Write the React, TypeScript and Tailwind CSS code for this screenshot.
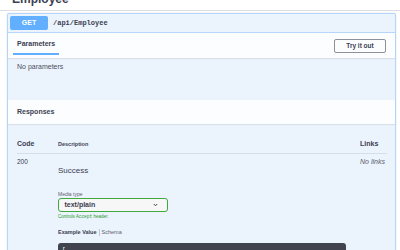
function Chevron() {
  return (
    <svg width="5" height="4" viewBox="0 0 10 8" fill="none" stroke="#3b4151" strokeWidth="2">
      <path d="M1.5 2l3.5 3.5L8.5 2" />
    </svg>
  );
}

export default function App() {
  return (
    <div className="h-[250px] w-[400px] overflow-hidden bg-white font-['Liberation_Sans',Arial,sans-serif] text-[#3b4151]">
      {/* tag title */}
      <div className="h-[11px] overflow-hidden border-b border-[#dcdee3] pl-[12px]">
        <h4 className="-mt-[9px] text-[12px] font-bold leading-[16px]">Employee</h4>
      </div>

      {/* opblock */}
      <div className="mt-[2px] ml-[7px] mr-[4px] h-[260px] rounded-[2px] border border-[#b4d7fb] bg-[#ebf3fd] shadow-[0_0_2px_rgba(0,0,0,0.12)]">
        {/* summary */}
        <div className="flex h-[19px] items-center border-b border-[#b4d7fb] pl-[2px]">
          <span className="flex h-[14px] w-[38px] items-center justify-center rounded-[2px] bg-[#61affe] text-[7px] font-bold text-white">
            GET
          </span>
          <span className="ml-[5px] font-['Liberation_Mono',monospace] text-[7px] font-bold">/api/Employee</span>
        </div>

        {/* parameters tab header */}
        <div className="flex h-[25px] items-start justify-between bg-white/80 shadow-[0_1px_1px_rgba(0,0,0,0.08)]">
          <div className="ml-[5px] flex flex-col">
            <span className="px-[4px] pt-[7px] text-[7px] font-bold leading-[8px]">Parameters</span>
            <span className="mt-[5px] h-[2px] w-full bg-[#61affe]" />
          </div>
          <button className="mt-[6px] mr-[9px] flex h-[14px] w-[52px] items-center justify-center rounded-[2px] border border-[#8d929a] bg-transparent text-[6.5px] font-bold">
            Try it out
          </button>
        </div>

        <div className="h-[42px] pl-[9px] pt-[5px] text-[7px] leading-[8px] text-[#4b505c]">No parameters</div>

        {/* responses header */}
        <div className="flex h-[24px] items-center bg-white/80 pl-[9px] shadow-[0_1px_1px_rgba(0,0,0,0.08)]">
          <span className="text-[7px] font-bold">Responses</span>
        </div>

        {/* responses table */}
        <div className="pl-[9px] pr-[8px] pt-[16px]">
          <div className="flex h-[14px] items-start border-b border-[#d6dde6]">
            <span className="w-[41px] text-[7px] font-bold leading-[8px]">Code</span>
            <span className="flex-1 pt-[1px] text-[5.5px] font-bold leading-[7px]">Description</span>
            <span className="w-[27px] text-[7px] font-bold leading-[8px]">Links</span>
          </div>

          <div className="flex items-start">
            <span className="w-[41px] pt-[4px] text-[6.5px] leading-[8px]">200</span>
            <div className="flex flex-1 flex-col pt-[12px]">
              <span className="text-[8px] leading-[10px]">Success</span>
              <span className="mt-[15px] text-[5px] leading-[7px] text-[#5c616c]">Media type</span>
              <div className="flex h-[14px] w-[110px] items-center justify-between rounded-[3px] border-[1.5px] border-[#3fa93f] bg-[#f7f7f7] pl-[5.5px] pr-[9px]">
                <span className="text-[7px] font-bold">text/plain</span>
                <Chevron />
              </div>
              <span className="mt-[1px] text-[4.5px] leading-[7px] text-[#2a9a2a]">
                Controls <span className="font-['Liberation_Mono',monospace]">Accept</span> header.
              </span>
              <div className="mt-[8px] flex items-center text-[5.5px] leading-[8px]">
                <span className="font-bold">Example Value</span>
                <span className="mx-[2px] h-[7px] w-px bg-[#c5c8ce]" />
                <span className="text-[#5c616c]">Schema</span>
              </div>
              <div className="mt-[7px] h-[40px] w-[288px] rounded-[3px] bg-[#41444e] pl-[4px] pt-[3px] font-['Liberation_Mono',monospace] text-[6px] leading-[8px] text-white">
                [
              </div>
            </div>
            <span className="w-[27px] pt-[4px] text-[7px] italic leading-[8px] text-[#5c616c]">No links</span>
          </div>
        </div>
      </div>
    </div>
  );
}
